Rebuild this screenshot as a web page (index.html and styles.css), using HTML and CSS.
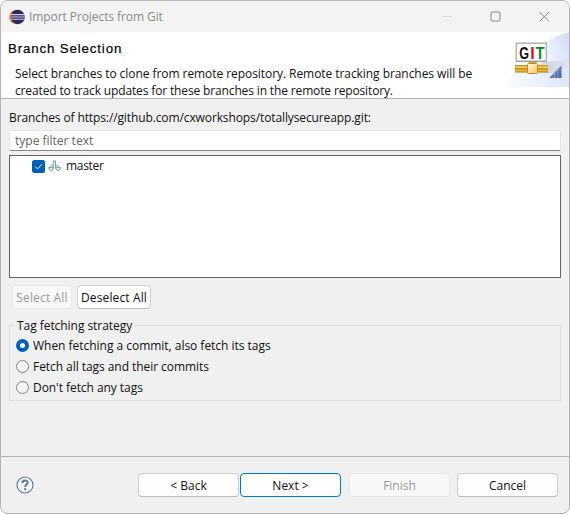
FILE: index.html
```
<!DOCTYPE html>
<html lang="en">
<head>
<meta charset="utf-8">
<title>Import Projects from Git</title>
<link rel="stylesheet" href="styles.css">
</head>
<body>
<div class="window">
  <header class="titlebar">
    <svg class="app-icon" width="16" height="16" viewBox="0 0 16 16">
      <circle cx="7.3" cy="8" r="7.3" fill="#f39a3b"/>
      <circle cx="8.7" cy="8" r="7.2" fill="#302560"/>
      <path d="M1.8 5.6h13.7M1.4 8h14.4M1.8 10.2h13.7" stroke="#d5d3e6" stroke-width="1.1"/>
    </svg>
    <span class="title">Import Projects from Git</span>
    <svg class="controls" width="110" height="12" viewBox="0 0 110 12" fill="none">
      <path d="M0 5.500h10" stroke="#dadada"/>
      <rect x="49" y="1" width="9" height="9" rx="1" stroke="#888"/>
      <path d="M97.500 1l9.500 9.500M107 1l-9.500 9.500" stroke="#888"/>
    </svg>
  </header>
  <section class="banner">
    <div class="banner-text">
      <h1>Branch Selection</h1>
      <p><span class="desc-a">Select branches to clone from remote repository. Remote tracking branches will be</span><br><span class="desc-b">created to track updates for these branches in the remote repository.</span></p>
    </div>
    <svg class="banner-art" width="62" height="55" viewBox="0 0 62 55">
      <defs>
        <linearGradient id="sky" x1="0" y1="0.5" x2="1" y2="0.2"><stop offset="0" stop-color="#fff"/><stop offset=".5" stop-color="#f6f9ff"/><stop offset="1" stop-color="#d3dff8"/></linearGradient>
        <linearGradient id="ground" x1="0" y1="0" x2="1" y2="0"><stop offset="0" stop-color="#fbfcff"/><stop offset="1" stop-color="#dce6fb"/></linearGradient>
        <linearGradient id="shade" x1="0" y1="0" x2="1" y2="0"><stop offset="0" stop-color="#d3d6de" stop-opacity="0"/><stop offset=".6" stop-color="#d2d6df"/><stop offset="1" stop-color="#dde2ee"/></linearGradient>
        <linearGradient id="pipe" x1="0" y1="0" x2="0" y2="1"><stop offset="0" stop-color="#c58d1c"/><stop offset=".35" stop-color="#f7d56b"/><stop offset=".5" stop-color="#b87b10"/><stop offset=".7" stop-color="#f3bd3d"/><stop offset="1" stop-color="#bb7c12"/></linearGradient>
        <linearGradient id="hub" x1="0" y1="0" x2="1" y2="1"><stop offset="0" stop-color="#fffbea"/><stop offset="1" stop-color="#f3c55d"/></linearGradient>
        <linearGradient id="wedge" x1="0" y1="0" x2="1" y2="1"><stop offset="0" stop-color="#8fa8d3"/><stop offset="1" stop-color="#3b5f9f"/></linearGradient>
      </defs>
      <path d="M62 0C44 5 34 12 28 25L0 55h62z" fill="url(#sky)"/>
      <path d="M8 35Q36 38 62 36V55H0Q4 43 8 35z" fill="url(#ground)"/>
      <path d="M38 30L62 28v7L46 41H9z" fill="url(#shade)"/>
      <rect x="9.300" y="11.200" width="30" height="18" fill="#fff" stroke="#b5b5a0" stroke-width="1.500"/>
      <path d="M9 29.500h30.500" stroke="#8f9dad"/>
      <g class="git"><text x="12.300" y="26.500" textLength="9.800" lengthAdjust="spacingAndGlyphs" fill="#111">G</text><text x="23.300" y="26.500" fill="#d1121e">I</text><text x="28.600" y="26.500" textLength="9" lengthAdjust="spacingAndGlyphs" fill="#0b8a1b">T</text></g>
      <rect x="21.500" y="30" width="8" height="3" fill="#d9a33a"/>
      <rect x="8" y="33" width="33" height="7.500" fill="url(#pipe)"/>
      <rect x="20.500" y="31.500" width="10" height="10" rx="1" fill="url(#hub)" stroke="#c88a1c"/>
      <path d="M54.500 33.500V46H42z" fill="url(#wedge)"/>
      <path d="M47.500 40v6M51 37v9" stroke="#9eb4db" stroke-width=".7"/>
    </svg>
  </section>
  <main class="content">
    <label class="branches">Branches of https://github.com/cxworkshops/totallysecureapp.git:</label>
    <div class="filter"><span>type filter text</span></div>
    <div class="tree">
      <div class="node">
        <svg width="13" height="13" viewBox="0 0 13 13"><rect width="13" height="13" rx="2.500" fill="#005fb8"/><path d="M3.300 6.700l2.200 2.200 4.300-4.500" fill="none" stroke="#fff"/></svg>
        <svg class="branch-icon" width="14" height="13" viewBox="0 0 14 13" fill="none" stroke="#6f9ba1" stroke-width=".9">
          <path d="M5.500 4.500V.8h2v3.700l3.200 2v1.300M5.500 4.500l-3.200 2v1.300M5.500 4.500v4M7.500 4.500v4"/>
          <path d="M.6 7.600h4.600v1.200l-2.300 2.400L.6 8.800zM7.800 7.600h4.600v1.200l-2.300 2.400-2.300-2.400z" fill="#d3eaea"/>
        </svg>
        <span class="master">master</span>
      </div>
    </div>
    <div class="select-row">
      <button class="btn small disabled" disabled><span class="sa">Select All</span></button>
      <button class="btn small deselect"><span class="da">Deselect All</span></button>
    </div>
    <fieldset class="group">
      <legend><span class="lg">Tag fetching strategy</span></legend>
      <div class="option"><i class="radio on"></i><span class="r1">When fetching a commit, also fetch its tags</span></div>
      <div class="option"><i class="radio"></i><span class="r2">Fetch all tags and their commits</span></div>
      <div class="option"><i class="radio"></i><span class="r3">Don't fetch any tags</span></div>
    </fieldset>
  </main>
  <footer class="footer">
    <svg class="help" width="18" height="18" viewBox="0 0 18 18" fill="none" stroke="#5e7696">
      <circle cx="9" cy="9" r="8" fill="#f5f7fa" stroke-width="1.100"/>
      <path d="M6.300 6.900C6.300 3.500 11.900 3.700 11.700 6.700 11.600 8.600 9.200 8.700 9.200 11" stroke-width="2"/>
      <path d="M9.200 12.300v2" stroke-width="2"/>
    </svg>
    <button class="btn"><span>&lt; Back</span></button>
    <button class="btn primary"><span>Next &gt;</span></button>
    <button class="btn disabled finish" disabled><span>Finish</span></button>
    <button class="btn cancel"><span>Cancel</span></button>
  </footer>
</div>
</body>
</html>
```
FILE: styles.css
```
* { box-sizing: border-box; }
body { margin: 0; background: #fff; font: 12px/17px "Open Sans", "Noto Sans", sans-serif; color: #111; }
span { white-space: nowrap; }
.window { width: 570px; height: 514px; border: 1px solid #b4b4b4; border-radius: 8px; overflow: hidden; background: #f0f0f0; display: flex; flex-direction: column; }
.titlebar { height: 31px; flex: none; background: #f3f3f3; display: flex; align-items: center; padding-left: 8px; color: #8b8b8b; }
.title { letter-spacing: -.08px; }
.app-icon { margin-right: 4px; }
.controls { margin: 0 17px 0 auto; }
.banner { height: 67px; flex: none; background: #fff; border-bottom: 1px solid #b4b4b4; display: flex; justify-content: space-between; }
.banner-text { padding: 8px 0 0 7px; }
h1 { margin: 0; font: 13.3px/17px "Liberation Sans", sans-serif; color: #000; -webkit-text-stroke: .2px #000; letter-spacing: .85px; }
p { margin: 8px 0 0 7px; line-height: 17px; white-space: nowrap; }
.desc-a { letter-spacing: -.062px; }
.desc-b { letter-spacing: -.14px; }
.banner-art { flex: none; }
.git { font: bold 16px "Liberation Sans", sans-serif; }
.content { flex: 1; padding: 10px 8px 0; display: flex; flex-direction: column; }
.branches { height: 21px; white-space: nowrap; letter-spacing: -.11px; }
.filter { height: 21px; flex: none; background: #fff; border: 1px solid #e5e5e5; border-bottom-color: #868686; border-radius: 2px; padding-left: 5px; line-height: 20px; color: #666; }
.tree { height: 123px; flex: none; margin-top: 4px; background: #fff; border: 1px solid #646464; padding: 2px 0 0 22px; }
.node { display: flex; align-items: center; height: 16px; }
.master { letter-spacing: -.3px; padding-bottom: 1px; }
.branch-icon { margin: 0 4px 0 3px; }
.select-row { display: flex; align-items: center; gap: 5px; margin: 7px 0 0 3px; height: 24px; }
.btn { width: 101px; height: 24px; flex: none; padding: 0; display: flex; justify-content: center; align-items: center; font: inherit; color: #111; background: #fdfdfd; border: 1px solid #d0d0d0; border-bottom-color: #bdbdbd; border-radius: 4px; }
.btn.small { width: 60px; }
.btn.deselect { width: 74px; }
.sa { letter-spacing: .15px; }
.da { letter-spacing: .12px; }
.btn.disabled { color: #9c9c9c; background: #f8f8f8; border-color: #e9e9e9; }
.btn.primary { border-color: #0078d4; margin: 0 8px 0 1px; }
.group { margin: 8px 0 0; height: 84px; border: 1px solid #dfdfdf; padding: 1px 0 0 6px; min-width: 0; }
legend { padding: 0 2px; margin-left: -1px; line-height: 17px; }
.lg { letter-spacing: -.05px; }
.option { display: flex; align-items: center; height: 21px; gap: 4px; }
.r1 { letter-spacing: -.025px; }
.r2, .r3 { letter-spacing: -.055px; }
.radio { width: 13px; height: 13px; border: 1px solid #858585; border-radius: 50%; background: #f5f5f5; }
.radio.on { border: 4px solid #005fb8; background: #fff; }
.footer { height: 57px; flex: none; border-top: 1px solid #b4b4b4; display: flex; align-items: center; padding: 0 11px 0 15px; }
.btn span { padding-top: 1px; }
.help { margin: 0 auto 0 0; }
.cancel { margin-left: 7px; }
```
